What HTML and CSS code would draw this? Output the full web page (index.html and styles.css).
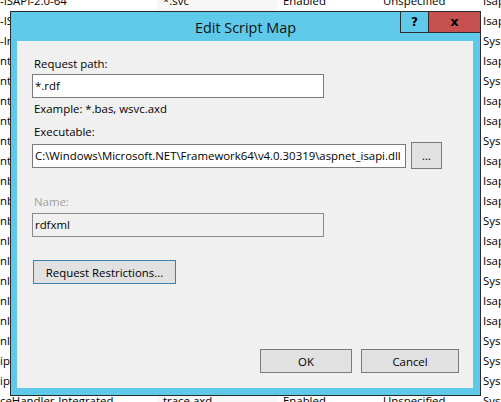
FILE: index.html
```html
<!DOCTYPE html>
<html>
<head>
<meta charset="utf-8">
<link rel="stylesheet" href="styles.css">
</head>
<body>
<div class="list">
  <div class="row"><span class="c1">-ISAPI-2.0-64</span><span class="c2">*.svc</span><span class="c3">Enabled</span><span class="c4">Unspecified</span><span class="c5">IsapiModule</span></div>
  <div class="row"><span class="c1">-ISAPI</span><span class="c2"></span><span class="c3"></span><span class="c4"></span><span class="c5">IsapiModule</span></div>
  <div class="row"><span class="c1">-In</span><span class="c2"></span><span class="c3"></span><span class="c4"></span><span class="c5">System</span></div>
  <div class="row"><span class="c1">ntr</span><span class="c2"></span><span class="c3"></span><span class="c4"></span><span class="c5">IsapiModule</span></div>
  <div class="row"><span class="c1">ntr</span><span class="c2"></span><span class="c3"></span><span class="c4"></span><span class="c5">System</span></div>
  <div class="row"><span class="c1">ntr</span><span class="c2"></span><span class="c3"></span><span class="c4"></span><span class="c5">IsapiModule</span></div>
  <div class="row"><span class="c1">ntr</span><span class="c2"></span><span class="c3"></span><span class="c4"></span><span class="c5">IsapiModule</span></div>
  <div class="row"><span class="c1">ntr</span><span class="c2"></span><span class="c3"></span><span class="c4"></span><span class="c5">System</span></div>
  <div class="row"><span class="c1">ntr</span><span class="c2"></span><span class="c3"></span><span class="c4"></span><span class="c5">IsapiModule</span></div>
  <div class="row"><span class="c1">nbx</span><span class="c2"></span><span class="c3"></span><span class="c4"></span><span class="c5">IsapiModule</span></div>
  <div class="row"><span class="c1">nbx</span><span class="c2"></span><span class="c3"></span><span class="c4"></span><span class="c5">IsapiModule</span></div>
  <div class="row"><span class="c1">nbx</span><span class="c2"></span><span class="c3"></span><span class="c4"></span><span class="c5">System</span></div>
  <div class="row"><span class="c1">nl-</span><span class="c2"></span><span class="c3"></span><span class="c4"></span><span class="c5">IsapiModule</span></div>
  <div class="row"><span class="c1">nl-</span><span class="c2"></span><span class="c3"></span><span class="c4"></span><span class="c5">IsapiModule</span></div>
  <div class="row"><span class="c1">nl-</span><span class="c2"></span><span class="c3"></span><span class="c4"></span><span class="c5">System</span></div>
  <div class="row"><span class="c1">nl-</span><span class="c2"></span><span class="c3"></span><span class="c4"></span><span class="c5">IsapiModule</span></div>
  <div class="row"><span class="c1">nl-</span><span class="c2"></span><span class="c3"></span><span class="c4"></span><span class="c5">IsapiModule</span></div>
  <div class="row"><span class="c1">nl-</span><span class="c2"></span><span class="c3"></span><span class="c4"></span><span class="c5">System</span></div>
  <div class="row"><span class="c1">ipt</span><span class="c2"></span><span class="c3"></span><span class="c4"></span><span class="c5">System</span></div>
  <div class="row"><span class="c1">ipt</span><span class="c2"></span><span class="c3"></span><span class="c4"></span><span class="c5">System</span></div>
  <div class="row"><span class="c1">ceHandler-Integrated</span><span class="c2">trace.axd</span><span class="c3">Enabled</span><span class="c4">Unspecified</span><span class="c5">System</span></div>
</div>

<div class="window">
  <div class="titlebar">
    <span class="title">Edit Script Map</span>
    <div class="controls">
      <span class="ctl help">?</span>
      <span class="ctl close">x</span>
    </div>
  </div>
  <div class="content">
    <div class="label first">Request path:</div>
    <div class="field short">*.rdf</div>
    <div class="hint">Example: *.bas, wsvc.axd</div>
    <div class="label exe-label">Executable:</div>
    <div class="exe-row">
      <div class="field exe">C:\Windows\Microsoft.NET\Framework64\v4.0.30319\aspnet_isapi.dll</div>
      <div class="btn browse">...</div>
    </div>
    <div class="label disabled name-label">Name:</div>
    <div class="field short disabled-field">rdfxml</div>
    <div class="btn restrictions">Request Restrictions...</div>
    <div class="footer">
      <div class="btn ok">OK</div>
      <div class="btn cancel">Cancel</div>
    </div>
  </div>
</div>
</body>
</html>
```

FILE: styles.css
```css
html, body {
  margin: 0;
  padding: 0;
  background: #ffffff;
  width: 501px;
  height: 402px;
  overflow: hidden;
  font-family: "Open Sans", "Noto Sans", sans-serif;
  font-size: 11.4px;
  color: #000;
}

.list {
  margin-top: -9px;
}

.row {
  display: grid;
  grid-template-columns: 157px 120px 100px 100px 1fr;
  height: 20px;
  line-height: 20px;
  white-space: nowrap;
}

.row span {
  overflow: hidden;
  padding-left: 6px;
}

.row .c1 {
  padding-left: 0;
}

.row .c2 {
  background: #f7f7f7;
}

.window {
  position: absolute;
  left: 10px;
  top: 11px;
  width: 469px;
  height: 383px;
  border: 1px solid #2b2b2b;
  background: #5fc9ea;
  display: flex;
  flex-direction: column;
}

.titlebar {
  position: relative;
  height: 29px;
  display: flex;
  align-items: center;
  justify-content: center;
  flex: none;
}

.title {
  font-size: 14.4px;
  color: #111;
  padding-top: 1px;
}

.controls {
  position: absolute;
  top: -1px;
  right: -1px;
  display: flex;
  border: 1px solid #2b2b2b;
  height: 20px;
}

.ctl {
  display: flex;
  align-items: center;
  justify-content: center;
  font-family: "DejaVu Sans", sans-serif;
  font-weight: bold;
  font-size: 12px;
  color: #000;
}

.help {
  width: 27px;
  border-right: 1px solid #2b2b2b;
  background: #5fc9ea;
}

.close {
  width: 51px;
  background: #c75050;
  font-size: 13px;
  padding-bottom: 2px;
  box-sizing: border-box;
}

.content {
  margin: 0 7px 0 6px;
  height: 347px;
  background: #f0f0f0;
  padding: 15px 14px 15px 15px;
  box-sizing: border-box;
  display: flex;
  flex-direction: column;
  align-items: flex-start;
}

.label, .hint {
  height: 16px;
  line-height: 16px;
  padding-left: 2px;
}

.field {
  box-sizing: border-box;
  height: 24px;
  line-height: 22px;
  border: 1px solid #7a7a7a;
  background: #fff;
  padding-left: 2px;
  white-space: nowrap;
  overflow: hidden;
}

.short {
  width: 292px;
  margin-top: 2px;
}

.hint {
  margin-top: 3px;
}

.exe-label {
  margin-top: 7px;
}

.exe-row {
  margin-top: 2px;
  display: flex;
  align-items: center;
  height: 27px;
}

.exe {
  width: 374px;
}

.btn {
  box-sizing: border-box;
  border: 1px solid #7a7a7a;
  background: #e1e1e1;
  display: flex;
  align-items: center;
  justify-content: center;
  height: 24px;
}

.browse {
  margin-left: 5px;
  width: 31px;
  height: 27px;
}

.name-label {
  margin-top: 25px;
}

.disabled {
  color: #a0a0a0;
}

.disabled-field {
  margin-top: 3px;
  background: #f0f0f0;
  border-color: #8a8a8a;
}

.restrictions {
  margin-top: 23px;
  margin-left: 1px;
  width: 143px;
  border-color: #3c7fb1;
}

.footer {
  margin-top: auto;
  align-self: stretch;
  display: flex;
  justify-content: flex-end;
  gap: 9px;
}

.ok {
  width: 92px;
}

.cancel {
  width: 98px;
}
```
